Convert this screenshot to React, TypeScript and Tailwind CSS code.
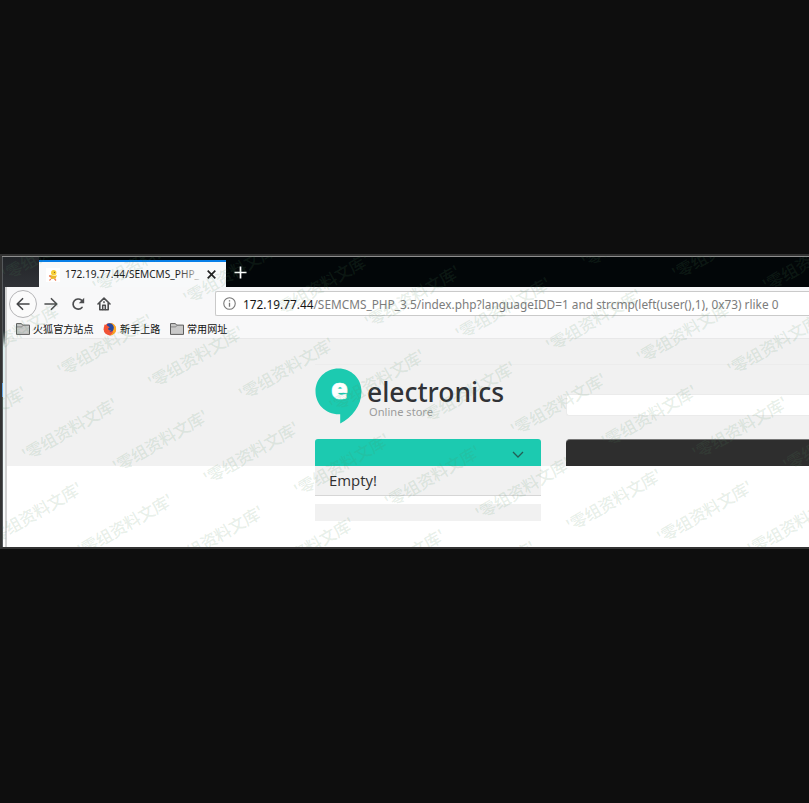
import React from "react";

const marks: { x: number; y: number }[] = [];
for (let i = -3; i < 12; i++) {
  for (let j = -4; j < 5; j++) {
    const x = 21 + 90.7 * i - 35.3 * j;
    const y = 450.5 + 11.8 * i + 84 * j;
    if (x > -110 && x < 808 && y > 246 && y < 594) marks.push({ x, y: y - 254 });
  }
}

function Watermark() {
  return (
    <svg className="pointer-events-none absolute inset-0" width="807" height="291" fill="#4f8a5e" fillOpacity="0.145">
      {marks.map((m, k) => (
        <text
          key={k}
          transform={`translate(${m.x + 3.5} ${m.y + 9}) rotate(-30)`}
          textLength="107"
          className="font-['Noto_Sans_CJK_SC',sans-serif] text-[16.5px] font-medium"
        >
          '零组资料文库'
        </text>
      ))}
    </svg>
  );
}

function Folder() {
  return (
    <svg width="14" height="12" viewBox="0 0 14 12" className="shrink-0">
      <path d="M.5 11.400V.6h4.900l1.200 1.500h6.900v9.300z" fill="#c9c9c9" stroke="#5d5d5d" strokeWidth="1" />
      <path d="M1 3.900h4.800l1-1.400" fill="none" stroke="#777" strokeWidth=".8" />
    </svg>
  );
}

function Firefox() {
  return (
    <svg width="14" height="14" viewBox="0 0 14 14" className="shrink-0">
      <circle cx="6.8" cy="7.2" r="6.2" fill="#f0543a" />
      <path d="M6 1.3C9 .2 13.7 3.2 13.1 7.8c-.4 3-2.9 5.6-6.2 5.6 3-1.4 3.8-4 2.7-6.6z" fill="#ffab22" />
      <path d="M4 1.9c3.3-2 6.6.3 6.8 3.4.2 2.5-1.4 4.6-3.7 4.6C4.700 9.900 3.500 8 4 6.500z" fill="#28499f" />
      <path d="M1.200 2.500C2.500 3.300 4 3 5.200 4.200L6.700 5.400 5 6.500c.2 1.500 1.500 2.200 3.400 1.800-1.300 2.700-5.700 2.300-6.500-.8z" fill="#f45332" />
    </svg>
  );
}

function TabBar() {
  return (
    <div className="flex h-[30px] bg-[#020608]">
      <div className="w-[36px] shrink-0 bg-gradient-to-b from-[#222529] to-[#303236]" />
      <div className="mt-[3px] flex h-[27px] w-[187px] shrink-0 items-center border-t-2 border-[#087fe8] bg-[#f8f9fa] text-[#191919]">
        <svg width="14" height="14" viewBox="0 0 14 14" className="ml-[7px] shrink-0">
          <rect width="14" height="14" fill="#fff" />
          <circle cx="7.700" cy="4.800" r="2.700" fill="#f7cf35" />
          <path d="M4 6.800l4 1.200 3-.7-1.500 3.400-4.300.4z" fill="#edb82a" />
          <path d="M4.800 10.800L3.500 12.500m5-1.700l1.500 1.700M3.200 7.500l1.500 1.600" stroke="#ed7148" strokeWidth="1.200" fill="none" />
          <circle cx="8.500" cy="4.300" r=".6" fill="#76562d" />
        </svg>
        <svg width="138" height="20" className="ml-[5px] shrink-0">
          <defs>
            <linearGradient id="fade" gradientUnits="userSpaceOnUse" x1="112" y1="0" x2="136" y2="0">
              <stop stopColor="#191919" />
              <stop offset="1" stopColor="#191919" stopOpacity=".15" />
            </linearGradient>
          </defs>
          <text x="0" y="13" textLength="134" lengthAdjust="spacingAndGlyphs" fill="url(#fade)" className="font-['Noto_Sans',sans-serif] text-[11px]">
            172.19.77.44/SEMCMS_PHP_
          </text>
        </svg>
        <svg width="9" height="9" viewBox="0 0 9 9" className="ml-[4px] shrink-0">
          <path d="M.7 .7l7.600 7.600M8.300 .7L.7 8.300" stroke="#222" strokeWidth="1.700" />
        </svg>
      </div>
      <svg width="13" height="13" viewBox="0 0 13 13" className="ml-[8px] mt-[9px]">
        <path d="M6.500 .5v12M.5 6.500h12" stroke="#fff" strokeWidth="1.700" />
      </svg>
    </div>
  );
}

function Toolbar() {
  return (
    <div className="flex h-[33px] items-center bg-[#f8f8f9]">
      <div className="ml-[2px] flex h-[28px] w-[28px] shrink-0 items-center justify-center rounded-full border border-[#b5b5b7] bg-[#fbfbfb]">
        <svg width="14" height="14" viewBox="0 0 14 14" fill="none" stroke="#444547" strokeWidth="1.600" strokeLinecap="round" strokeLinejoin="round">
          <path d="M13 7H1.300M6.600 1.700L1.200 7l5.400 5.300" />
        </svg>
      </div>
      <svg width="14" height="14" viewBox="0 0 14 14" className="ml-[7px] shrink-0" fill="none" stroke="#4c4d4f" strokeWidth="1.600" strokeLinecap="round" strokeLinejoin="round">
        <path d="M1 7h11.700M7.400 1.700L12.800 7l-5.400 5.300" />
      </svg>
      <svg width="14" height="14" viewBox="0 0 14 14" className="ml-[13px] shrink-0">
        <path d="M11 10.500A5.100 5.100 0 1 1 10.500 3.200" fill="none" stroke="#4c4d4f" strokeWidth="1.700" strokeLinecap="round" />
        <path d="M13.200 .8v5.400H7.800z" fill="#4c4d4f" />
      </svg>
      <svg width="14" height="14" viewBox="0 0 14 14" className="ml-[12px] shrink-0" fill="none" stroke="#4c4d4f" strokeWidth="1.600" strokeLinecap="round" strokeLinejoin="round">
        <path d="M1 7l6-5.800L13 7M2.800 6.200v6.600h8.400V6.200" />
        <path d="M5.700 12.500V8.300h2.600v4.200M7 4.800v.8" strokeWidth="1.500" />
      </svg>
      <div className="ml-[104px] flex h-[25px] min-w-0 flex-1 items-center rounded-l-[2px] border border-r-0 border-[#cacaca] bg-white">
        <svg width="13" height="13" viewBox="0 0 12 12" className="ml-[7px] shrink-0" fill="none" stroke="#767676">
          <circle cx="6" cy="6" r="5.300" strokeWidth="1" />
          <path d="M6 5.200v3.700M6 2.900v1.200" strokeWidth="1.200" />
        </svg>
        <svg width="560" height="23" className="ml-[7px] shrink-0 font-['Noto_Sans',sans-serif] text-[13.200px]">
          <text x="0" y="16.500" textLength="535.500" lengthAdjust="spacingAndGlyphs" fill="#7c7c7c">
            <tspan fill="#151515">172.19.77.44</tspan>/SEMCMS_PHP_3.5/index.php?languageIDD=1 and strcmp(left(user(),1), 0x73) rlike 0
          </text>
        </svg>
      </div>
    </div>
  );
}

function Bookmarks() {
  return (
    <div className="flex h-[19px] items-center border-b border-[#e8e8e9] bg-[#f8f8f9] pl-[9px] font-['Noto_Sans_CJK_SC',sans-serif] text-[10.100px] leading-[18px] text-[#111]">
      <Folder />
      <span className="ml-[3px] w-[61px] whitespace-nowrap">火狐官方站点</span>
      <span className="ml-[9px]"><Firefox /></span>
      <span className="ml-[3px] w-[41px] whitespace-nowrap">新手上路</span>
      <span className="ml-[9px]"><Folder /></span>
      <span className="ml-[3px] whitespace-nowrap">常用网址</span>
    </div>
  );
}

function Logo() {
  return (
    <svg width="200" height="58" viewBox="0 0 200 58" className="shrink-0">
      <path d="M23.500 .5C36.200 .5 46.500 10.500 46.500 23.300 46.500 38 37 49.500 25.200 55.500V46.300C11 47 .5 36.500 .5 23.300 .5 10.500 10.800 .5 23.500 .5z" fill="#1ccab0" />
      <text x="16" y="31" textLength="17" lengthAdjust="spacingAndGlyphs" fill="#fff" stroke="#fff" strokeWidth=".7" className="font-['Open_Sans',sans-serif] text-[29px] font-extrabold">e</text>
      <text x="52" y="33.500" textLength="137" lengthAdjust="spacingAndGlyphs" fill="#303236" className="font-['Noto_Sans',sans-serif] text-[27px] font-medium">electronics</text>
      <text x="54" y="47.500" textLength="64" lengthAdjust="spacingAndGlyphs" fill="#9c9c9c" className="font-['Noto_Sans',sans-serif] text-[11.500px]">Online store</text>
    </svg>
  );
}

function Page() {
  return (
    <div className="h-[208px] bg-gradient-to-b from-[#f1f1f1] from-[127px] to-white to-[127px] pl-[308px]">
      <div className="h-[26px] border-b border-[#ececec]" />
      <div className="flex">
        <div className="w-[226px] shrink-0">
          <div className="h-[74px] pt-[3px]">
            <Logo />
          </div>
          <div className="flex h-[27px] items-center justify-end rounded-t-[3px] bg-[#1ccab0] pr-[17px]">
            <svg width="12" height="7" viewBox="0 0 12 7" className="mt-[3px]" fill="none" stroke="#235e55" strokeWidth="1.300">
              <path d="M1 1l5 5 5-5" />
            </svg>
          </div>
          <div className="flex h-[30px] items-center border-b border-[#d6d6d6] bg-[#f1f1f1] pl-[13px]">
            <svg width="52" height="24">
              <text x="1" y="16.500" textLength="48" lengthAdjust="spacingAndGlyphs" fill="#303030" className="font-['Open_Sans',sans-serif] text-[14.500px]">Empty!</text>
            </svg>
          </div>
          <div className="mt-[8px] h-[17px] bg-[#f1f1f1]" />
        </div>
        <div className="ml-[25px] min-w-0 flex-1 pt-[29px]">
          <div className="h-[22px] rounded-l-[3px] border border-r-0 border-[#ebebeb] bg-white" />
          <div className="mt-[23px] h-[27px] rounded-tl-[4px] border-t border-[#777] bg-[#2e2e2e]" />
        </div>
      </div>
    </div>
  );
}

export default function App() {
  return (
    <div className="h-[803px] w-[809px] overflow-hidden bg-[#0e0e0e] pt-[254px]">
      <div className="relative flex h-[295px] flex-col overflow-hidden border-y-2 border-l-2 border-[#333]">
        <div className="h-px shrink-0 bg-[#8f8f8f]" />
        <div className="flex">
          <div className="flex w-px shrink-0 flex-col bg-[#55585b]">
            <div className="h-[126px]" />
            <div className="h-[14px] bg-[#65a4e5]" />
          </div>
          <div className="min-w-0 flex-1">
            <TabBar />
            <div className="flex">
              <div className="w-[4px] shrink-0 border-r-2 border-[#d2d2d2] bg-gradient-to-b from-[#34373d] from-[45px] via-[#dceeee] via-[60px] to-white" />
              <div className="min-w-0 flex-1">
                <Toolbar />
                <Bookmarks />
                <Page />
              </div>
            </div>
          </div>
        </div>
        <Watermark />
      </div>
    </div>
  );
}
